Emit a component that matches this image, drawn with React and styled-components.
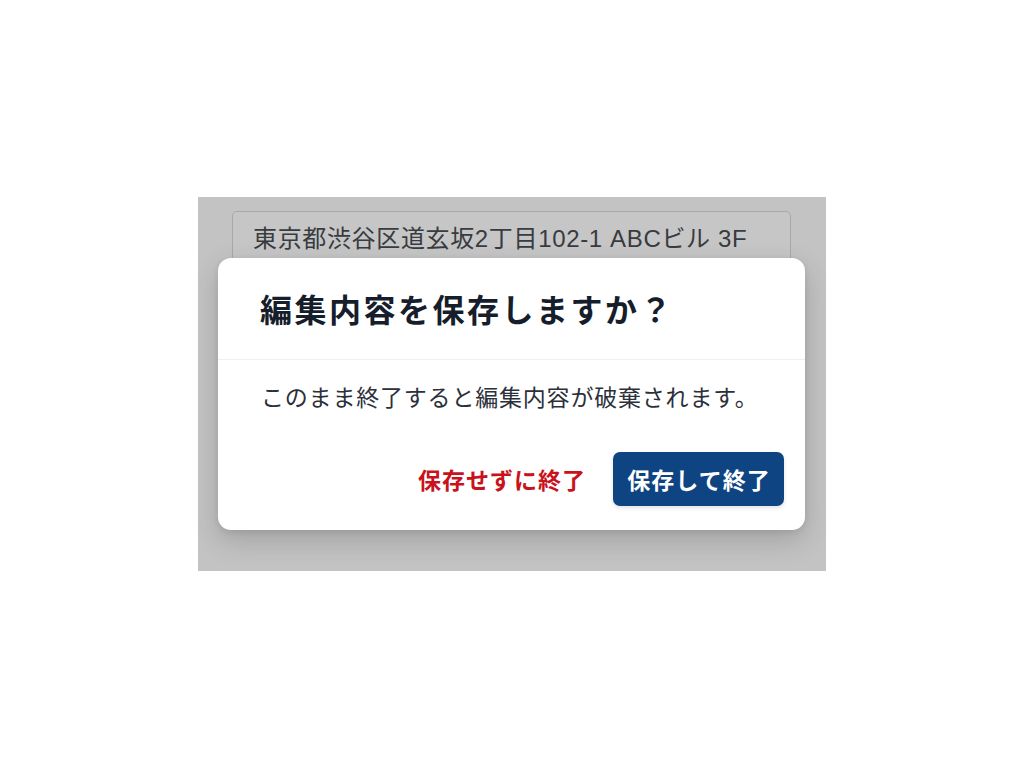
import React from "react";
import styled, { createGlobalStyle } from "styled-components";

const Global = createGlobalStyle`
  html, body { margin: 0; padding: 0; background: #ffffff; }
  body { font-family: "Noto Sans CJK JP", "Noto Sans", sans-serif; }
  * { box-sizing: border-box; }
`;

const Page = styled.div`
  width: 1024px;
  height: 768px;
  display: flex;
  align-items: center;
  justify-content: center;
`;

const Screen = styled.div`
  position: relative;
  width: 628px;
  height: 374px;
  background: #c3c3c3;
  padding: 14px 35px 0 34px;
`;

const AddressField = styled.div`
  height: 60px;
  border: 1px solid #a8a8a8;
  border-radius: 5px;
  background: #c6c6c6;
  padding: 11px 0 0 20px;
  font-family: "Liberation Sans", "Noto Sans CJK JP", sans-serif;
  font-size: 24px;
  line-height: 32px;
  color: #383b40;
  letter-spacing: 0.65px;
  white-space: nowrap;
`;

const Dialog = styled.div`
  position: absolute;
  left: 20px;
  top: 61px;
  width: 587px;
  height: 272px;
  background: #ffffff;
  border-radius: 13px;
  box-shadow: 0 10px 28px rgba(0, 0, 0, 0.18), 0 2px 6px rgba(0, 0, 0, 0.08);
  display: flex;
  flex-direction: column;
  overflow: hidden;
`;

const Header = styled.div`
  height: 102px;
  padding: 30px 0 0 42px;
  border-bottom: 1px solid #efefef;
`;

const Title = styled.h2`
  margin: 0;
  font-size: 32px;
  line-height: 40px;
  font-weight: 700;
  color: #161d2b;
  letter-spacing: 2.5px;
`;

const Body = styled.div`
  padding: 19px 0 0 43px;
`;

const Message = styled.p`
  margin: 0;
  font-size: 23px;
  line-height: 34px;
  color: #2b303a;
  letter-spacing: 0.8px;
`;

const Actions = styled.div`
  margin-top: auto;
  display: flex;
  justify-content: flex-end;
  align-items: center;
  gap: 27px;
  padding: 0 21px 24px 0;
`;

const TextButton = styled.button`
  border: none;
  background: none;
  padding: 0;
  font-family: inherit;
  font-size: 23px;
  font-weight: 700;
  color: #c8121c;
  letter-spacing: 1px;
  cursor: pointer;
`;

const PrimaryButton = styled.button`
  border: none;
  width: 171px;
  height: 54px;
  padding: 0 0 0 1px;
  border-radius: 7px;
  background: #0e4482;
  color: #ffffff;
  font-family: inherit;
  font-size: 23px;
  font-weight: 700;
  letter-spacing: 1px;
  box-shadow: 0 2px 4px rgba(0, 0, 0, 0.12);
  cursor: pointer;
`;

export default function App() {
  return (
    <>
      <Global />
      <Page>
        <Screen>
          <AddressField>東京都渋谷区道玄坂2丁目102-1 ABCビル 3F</AddressField>
          <Dialog>
            <Header>
              <Title>編集内容を保存しますか？</Title>
            </Header>
            <Body>
              <Message>このまま終了すると編集内容が破棄されます。</Message>
            </Body>
            <Actions>
              <TextButton>保存せずに終了</TextButton>
              <PrimaryButton>保存して終了</PrimaryButton>
            </Actions>
          </Dialog>
        </Screen>
      </Page>
    </>
  );
}
